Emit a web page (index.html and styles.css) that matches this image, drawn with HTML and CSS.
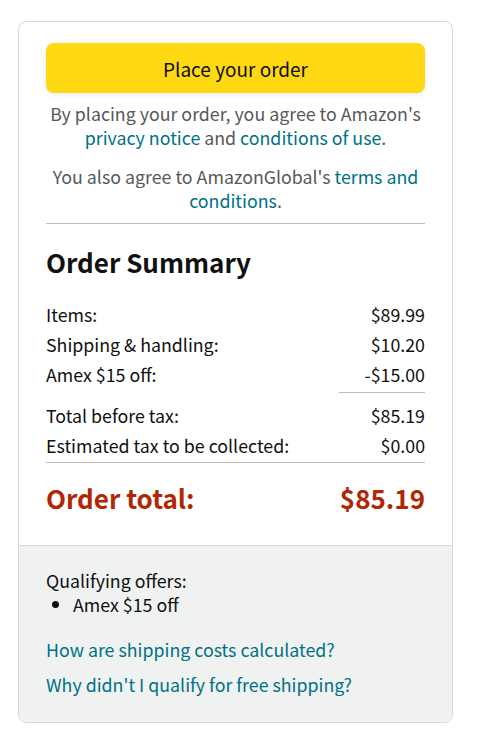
FILE: index.html
```html
<!DOCTYPE html>
<html>
<head>
<meta charset="utf-8">
<link rel="stylesheet" href="styles.css">
</head>
<body>
<div class="page">
  <div class="card">
    <div class="main">
      <button class="place-btn">Place your order</button>
      <p class="legal">By placing your order, you agree to Amazon's <a href="#">privacy notice</a> and <a href="#">conditions of use</a>.</p>
      <p class="legal legal2">You also agree to AmazonGlobal's <a href="#">terms and conditions</a>.</p>
      <hr class="divider">
      <h2 class="title">Order Summary</h2>
      <div class="rows">
        <div class="row"><span>Items:</span><span>$89.99</span></div>
        <div class="row"><span>Shipping &amp; handling:</span><span>$10.20</span></div>
        <div class="row"><span>Amex $15 off:</span><span>-$15.00</span></div>
        <div class="short-rule"></div>
        <div class="row"><span>Total before tax:</span><span>$85.19</span></div>
        <div class="row"><span>Estimated tax to be collected:</span><span>$0.00</span></div>
      </div>
      <hr class="divider divider2">
      <div class="total"><span>Order total:</span><span>$85.19</span></div>
    </div>
    <div class="foot">
      <div class="offers">Qualifying offers:</div>
      <ul class="offer-list"><li>Amex $15 off</li></ul>
      <a class="foot-link" href="#">How are shipping costs calculated?</a>
      <a class="foot-link" href="#">Why didn't I qualify for free shipping?</a>
    </div>
  </div>
</div>
</body>
</html>
```

FILE: styles.css
```css
* { box-sizing: border-box; }
html, body { margin: 0; padding: 0; background: #fff; }
body {
  font-family: "Noto Sans CJK KR", "Noto Sans", sans-serif;
  color: #0f1111;
  font-size: 17.8px;
}
.page { padding: 21px 26px 0 18px; }
.card {
  width: 435px;
  border: 1px solid #d5d9d9;
  border-radius: 8px;
  overflow: hidden;
}
.main { padding: 21px 27px 29px 27px; }
.place-btn {
  display: block;
  width: 100%;
  height: 50px;
  border: none;
  border-radius: 8px;
  background: #ffd814;
  box-shadow: 0 2px 5px 0 rgba(213,217,217,0.5);
  font-family: inherit;
  font-size: 19px;
  color: #0f1111;
  cursor: pointer;
}
.legal {
  margin: 8px 0 0;
  text-align: center;
  color: #565959;
  line-height: 24px;
}
.legal2 { margin-top: 15px; }
.legal a { color: #007185; text-decoration: none; }
.divider { border: 0; border-top: 1px solid #bbbfbf; margin: 11px 0 0; }
.title {
  margin: 22px 0 0;
  font-size: 26px;
  font-weight: 700;
  line-height: 32px;
}
.rows { margin-top: 21px; }
.row {
  display: flex;
  justify-content: space-between;
  line-height: 30px;
}
.short-rule {
  width: 86px;
  margin-left: auto;
  border-top: 1px solid #bbbfbf;
  margin-top: 3px;
  margin-bottom: 7px;
}
.divider2 { margin-top: 2px; }
.total {
  display: flex;
  justify-content: space-between;
  color: #b12704;
  font-size: 26px;
  font-weight: 700;
  line-height: 36px;
  margin-top: 17px;
}
.foot {
  background: #f0f2f2;
  border-top: 1px solid #d5d9d9;
  padding: 22px 27px 26px;
}
.offers { line-height: 24px; }
.offer-list { margin: 0; padding-left: 27px; line-height: 24px; }
.foot-link {
  display: block;
  color: #007185;
  text-decoration: none;
  line-height: 24px;
}
.offer-list + .foot-link { margin-top: 21px; }
.foot-link + .foot-link { margin-top: 11px; }
```
